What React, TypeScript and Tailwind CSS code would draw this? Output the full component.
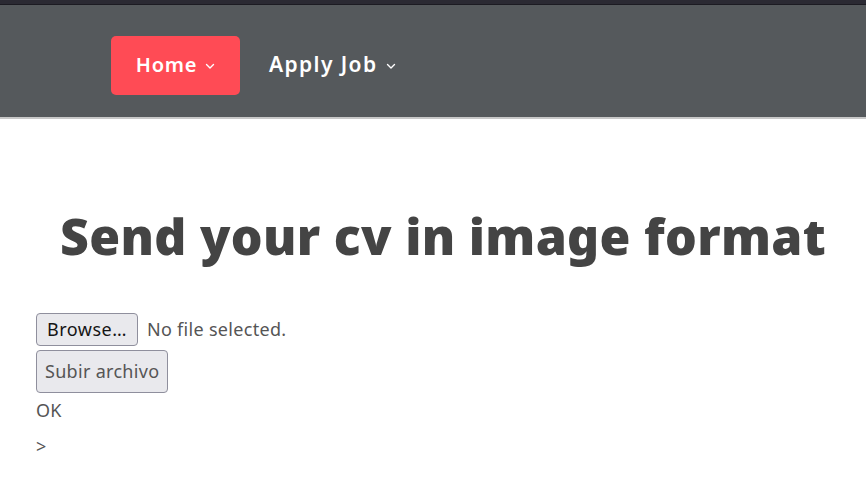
import React from 'react';

function Chevron() {
  return (
    <svg width="10" height="10" viewBox="0 0 10 10" className="ml-[8px] mt-0.5" fill="none">
      <path d="M1.5 3.5 L5 7 L8.5 3.5" stroke="currentColor" strokeWidth="1.4" strokeLinecap="round" strokeLinejoin="round" />
    </svg>
  );
}

export default function App() {
  return (
    <div className="min-h-screen bg-white text-[#444444]" style={{ fontFamily: '"Noto Sans", "Open Sans", sans-serif' }}>
      {/* barre du haut */}
      <div className="h-[5px] bg-[#2b2a33] border-b border-[#1c1b22]" />

      {/* NAVBAR */}
      <nav className="h-[114px] bg-[#55595c] border-b-2 border-[#c8c8c8] flex items-center pl-[111px] pt-[8px]">
        <a className="h-[59px] w-[129px] rounded-[5px] bg-[#ff4b55] text-white font-semibold text-[20px] tracking-[0.8px] flex items-center justify-center">
          Home <Chevron />
        </a>
        <a className="ml-[29px] text-white font-semibold text-[21px] tracking-[1.4px] flex items-center">
          Apply Job <Chevron />
        </a>
      </nav>

      <main className="px-[36px]">
        <h1 className="text-center text-[50px] font-black tracking-[0.3px] text-[#444444] mt-[85px] mb-[45px] pl-[20px] leading-[64px]">
          Send your cv in image format
        </h1>

        <form className="text-[18px] tracking-[0.3px]">
          <div className="flex items-center gap-[9px]">
            <button type="button" className="h-[33px] px-[10px] rounded-[4px] border border-[#8f8f9d] bg-[#e9e9ed] text-[#151515] text-[18px] tracking-[0.5px]">
              Browse…
            </button>
            <span className="text-[#555555]">No file selected.</span>
          </div>
          <button type="button" className="mt-[4px] h-[43px] px-[8px] rounded-[4px] border border-[#8f8f9d] bg-[#e9e9ed] text-[#555555] text-[18px]">
            Subir archivo
          </button>
          <p className="mt-[4px] leading-[26px] text-[#555555]">OK</p>
          <p className="mt-[10px] leading-[26px] text-[#555555]">&gt;</p>
        </form>
      </main>
    </div>
  );
}
